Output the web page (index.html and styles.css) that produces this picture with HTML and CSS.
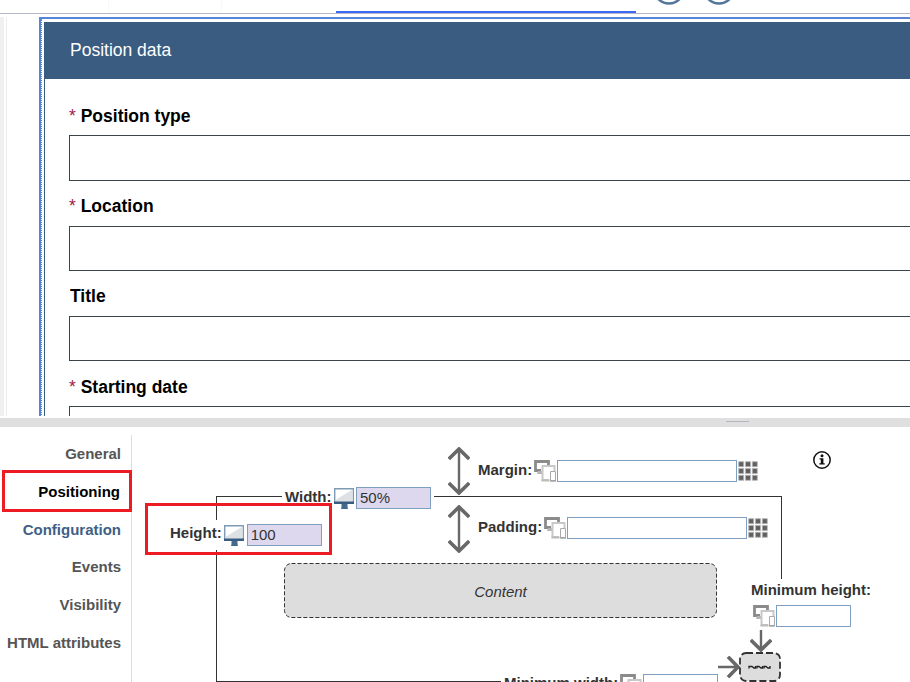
FILE: index.html
```
<!DOCTYPE html>
<html lang="en">
<head>
<meta charset="utf-8">
<title>Form designer</title>
<link rel="stylesheet" href="styles.css">
</head>
<body>
<svg class="defs" width="0" height="0" aria-hidden="true">
  <defs>
    <symbol id="monitor" viewBox="0 0 21 21"><path d="M.7.700h18.600v13H.7z" fill="#fff" stroke="#7f9ab5" stroke-width="1.400"/><path d="M18.600 1.400V14H1.400v-2z" fill="#dde0e4"/><path d="M0 13.500h20v2.500H0z" fill="#3a5c80"/><path d="M7.500 16h6v3l.5 2H7l.5-2z" fill="#45698d"/></symbol>
    <symbol id="devices" viewBox="0 0 22 22"><path d="M7 10.500H1.500v-9h13V5" fill="none" stroke="#8b8b8b" stroke-width="2.800"/><path d="M4 11h4v3H3z" fill="#b5b5b5"/><path d="M15 20H8.500V6h12v5" fill="#fff" stroke="#c8c8c8" stroke-width="2"/><path d="M7.500 19.500h8v2h-8z" fill="#bbb"/><path d="M16.500 11.500h5v9.500h-5z" fill="#fff" stroke="#aaa"/><path d="M16 20h6v1.500h-6z" fill="#a5a5a5"/></symbol>
    <symbol id="updown" viewBox="0 0 22 48"><path d="M11 2v44" stroke="#686868" stroke-width="2.400"/><path d="M.8 12 11 2l10.200 10M.8 36 11 46l10.200-10" fill="none" stroke="#686868" stroke-width="3.600"/></symbol>
    <symbol id="arrow" viewBox="0 0 22 22"><path d="M11 0v20" stroke="#686868" stroke-width="2.400"/><path d="M.8 10 11 20l10.200-10" fill="none" stroke="#686868" stroke-width="3.600"/></symbol>
    <symbol id="grid" viewBox="0 0 20 20"><path d="M.7.700h5v5h-5zM7.500.700h5v5h-5zM14.300.700h5v5h-5zM.7 7.500h5v5h-5zM7.500 7.500h5v5h-5zM14.300 7.500h5v5h-5zM.7 14.300h5v5h-5zM7.500 14.300h5v5h-5zM14.300 14.300h5v5h-5z" fill="#606060" stroke="#b5b5b5" stroke-width=".9"/></symbol>
  </defs>
</svg>
<header class="toolbar">
  <div class="tab"></div>
  <div class="tab"></div>
  <div class="tab tab-active"></div>
  <svg class="tools" width="84" height="13"><g fill="none" stroke="#55779a" stroke-width="2.500"><circle cx="18" cy="-11.500" r="15"/><circle cx="68" cy="-11.500" r="15"/></g></svg>
</header>
<main class="preview">
  <div class="gutter"></div>
  <div class="selection">
    <section class="form">
      <h1 class="form-title">Position data</h1>
      <div class="fields">
        <div class="field"><label><span class="req">*</span> Position type</label><div class="control"></div></div>
        <div class="field"><label><span class="req">*</span> Location</label><div class="control"></div></div>
        <div class="field"><label>Title</label><div class="control"></div></div>
        <div class="field"><label><span class="req">*</span> Starting date</label><div class="control"></div></div>
      </div>
    </section>
  </div>
</main>
<div class="splitter"><i class="grip"></i></div>
<section class="properties">
  <nav class="nav">
    <a>General</a>
    <a class="current">Positioning</a>
    <a class="configured">Configuration</a>
    <a>Events</a>
    <a>Visibility</a>
    <a>HTML attributes</a>
  </nav>
  <div class="diagram">
    <div class="outer-box"></div>
    <div class="item width"><label>Width:</label><svg class="mon"><use href="#monitor"/></svg><div class="value">50%</div></div>
    <div class="item height"><label>Height:</label><svg class="mon"><use href="#monitor"/></svg><div class="value">100</div></div>
    <div class="item margin"><svg class="ud"><use href="#updown"/></svg><label>Margin:</label><svg class="dev"><use href="#devices"/></svg><div class="value long"></div><svg class="dots"><use href="#grid"/></svg></div>
    <div class="item padding"><svg class="ud"><use href="#updown"/></svg><label>Padding:</label><svg class="dev"><use href="#devices"/></svg><div class="value long"></div><svg class="dots"><use href="#grid"/></svg></div>
    <div class="content-box"><svg width="433" height="55"><rect x=".5" y=".5" width="432" height="54" rx="7" fill="#ddd" stroke="#333" stroke-dasharray="4 2"/></svg><em>Content</em></div>
    <div class="min-height"><label>Minimum height:</label><div class="line"><svg class="dev"><use href="#devices"/></svg><div class="value"></div></div></div>
    <div class="item min-width"><label>Minimum width:</label><svg class="dev"><use href="#devices"/></svg><div class="value"></div></div>
    <svg class="down"><use href="#arrow"/></svg>
    <svg class="right"><use href="#arrow"/></svg>
    <svg class="mini" width="42" height="30"><rect x="1" y="1" width="40" height="28" rx="6" fill="#ddd" stroke="#333" stroke-width="1.800" stroke-dasharray="7 3"/><path d="M10 16.500v-2h3l2 1.500h1.500v-2M18 16.500v-2h2l2 1.500h1.500v-2M25 16.500v-2h2l2 1.500h2v-2" fill="none" stroke="#222" stroke-width="1.300"/></svg>
    <svg class="info" width="20" height="20" viewBox="0 0 20 20"><circle cx="10" cy="10" r="8.200" fill="#fff" stroke="#111" stroke-width="1.500"/><circle cx="10" cy="5.800" r="1.500" fill="#111"/><path d="M7.500 8.300h3.900v4.900h1.300v1.400H7.300v-1.400h1.500V9.600H7.500z" fill="#111"/></svg>
  </div>
  <div class="mark mark-nav"></div>
  <div class="mark mark-height"></div>
</section>
</body>
</html>
```
FILE: styles.css
```
* { box-sizing: border-box; }
body {
  margin: 0;
  width: 910px;
  height: 682px;
  overflow: hidden;
  display: flex;
  flex-direction: column;
  background: #fff;
  font-family: "Liberation Sans", Arial, sans-serif;
  color: #333;
}
svg { display: block; flex: none; }
.defs { position: absolute; }

.toolbar {
  height: 14px;
  flex: none;
  display: flex;
  border-bottom: 1px solid #b4b7c4;
}
.tab { width: 109px; border-right: 1px solid #f8f8f8; }
.tab + .tab { width: 113px; }
.tab.tab-active { width: 300px; margin-left: 114px; border: 0; border-bottom: 2px solid #3e68f6; }
.tools { margin-left: 15px; }

.preview {
  height: 402px;
  flex: none;
  padding-top: 3px;
  display: flex;
  overflow: hidden;
}
.gutter {
  width: 7px;
  flex: none;
  background: #f0f0f0;
  border-right: 1px solid #ededed;
  box-shadow: inset -2px 0 #fff;
}
.selection {
  margin-left: 32px;
  flex: 1;
  border: solid #5585d4;
  border-width: 2px 0 0 2px;
  height: 460px;
}
.form {
  height: 100%;
  border-left: 1px dotted #5585d4;
  padding: 3px 0 0 2px;
}
.form-title {
  margin: 0;
  height: 57px;
  padding-left: 26px;
  background: #3a5c80;
  color: #fff;
  font-size: 17.500px;
  font-weight: 400;
  line-height: 56px;
}
.fields {
  height: 380px;
  border-left: 1px solid #3a5c80;
  padding: 24px 0 0 24px;
}
.field { height: 90px; }
.field label {
  display: block;
  height: 32px;
  padding-left: 1px;
  color: #000;
  font-size: 17.500px;
  font-weight: 700;
  line-height: 26px;
}
.req { color: #a01c44; font-weight: 400; margin-left: -1px; }
.control { height: 46px; border: 1px solid #3b4448; border-right: 0; }
.field:nth-child(2) label, .field:nth-child(3) label { height: 33px; }
.field:nth-child(2) .control, .field:nth-child(3) .control { height: 45px; }
.field:nth-child(3) { height: 91px; }

.splitter {
  margin-top: 2px;
  height: 9px;
  flex: none;
  padding: 3px 0 0 726px;
  background: #dfdfdf;
}
.grip { display: block; width: 23px; height: 1px; background: #b3b6bf; }

.properties { position: relative; height: 255px; flex: none; display: flex; }
.nav {
  width: 132px;
  height: 247px;
  margin-top: 8px;
  flex: none;
  display: flex;
  flex-direction: column;
  border-right: 1px solid #ddd;
}
.nav a {
  height: 37.800px;
  padding-right: 10px;
  text-align: right;
  color: #555;
  font-size: 15px;
  font-weight: 700;
  line-height: 37px;
}
.nav .current { color: #000; padding-right: 11px; }
.nav .configured { color: #3f5f86; }

/* Box model diagram: labels and fields sit over the outline they describe. */
.diagram { position: relative; flex: 1; font-size: 15px; }
.diagram label { font-weight: 700; line-height: 20px; white-space: nowrap; }
.outer-box {
  position: absolute;
  left: 84px;
  top: 69px;
  width: 566px;
  height: 186px;
  border: 1px solid #333;
}
.item { position: absolute; display: flex; align-items: center; height: 22px; }
.item label { padding-bottom: 2px; }
.value {
  width: 75px;
  height: 22px;
  flex: none;
  padding-left: 3px;
  border: 1px solid #7f9fc0;
  background: #fff;
  line-height: 20px;
}
.width .value, .height .value { background: #ddd8ee; }
.value.long { width: 180px; }
.mon { width: 21px; height: 21px; margin: 0 2px; }
.dev { width: 22px; height: 22px; margin: 0 1px 0 2px; }
.dots { width: 20px; height: 20px; margin-left: 1px; }
.ud { width: 22px; height: 48px; margin-right: 8px; }
.width { left: 150px; top: 60px; width: 152px; padding: 0 3px; background: #fff; }
.height { left: 38px; top: 93px; height: 30px; background: #fff; }
.height label { padding-bottom: 4px; }
.margin { left: 316px; top: 33px; }
.padding { left: 316px; top: 90px; }
.padding .ud { position: relative; top: 1px; }
.width .value, .height .value { margin-left: auto; }
.width .mon { margin-right: 0; }
.content-box {
  position: absolute;
  left: 152px;
  top: 136px;
  width: 433px;
  height: 55px;
  display: grid;
  place-items: center;
}
.content-box > * { grid-area: 1 / 1; }
.content-box em { position: relative; top: 1px; }
.min-height { position: absolute; left: 617px; top: 152px; width: 125px; padding-left: 2px; background: #fff; height: 103px; }
.min-height label { display: block; height: 26px; line-height: 22px; }
.line { display: flex; }
.down { position: absolute; left: 618px; top: 203px; width: 22px; height: 22px; }
.right { position: absolute; left: 586px; top: 229px; width: 22px; height: 22px; transform: rotate(-90deg); }
.mini { position: absolute; left: 607px; top: 225px; }
.min-width { left: 369px; top: 247px; width: 281px; padding-left: 3px; background: #fff; }
.min-width label { padding-bottom: 4px; }
.info { position: absolute; left: 680px; top: 23px; }

.mark { position: absolute; border: 3px solid #ed1c24; }
.mark-nav { left: 2px; top: 43px; width: 130px; height: 42px; }
.mark-height { left: 145px; top: 76px; width: 187px; height: 52px; }
```
